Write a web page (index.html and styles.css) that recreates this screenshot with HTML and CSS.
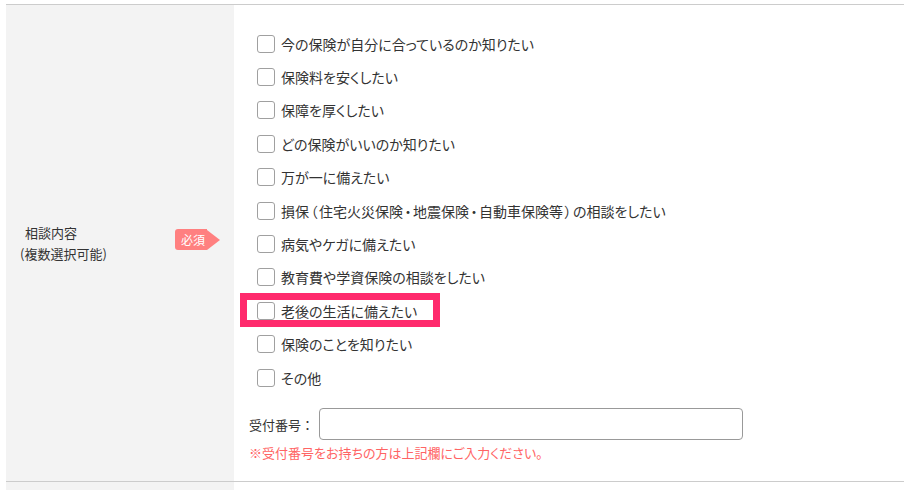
FILE: index.html
```html
<!DOCTYPE html>
<html lang="ja">
<head>
<meta charset="utf-8">
<title>相談内容</title>
<link rel="stylesheet" href="styles.css">
</head>
<body>
<div class="form">
  <div class="row">
    <div class="row-head">
      <div class="head-label">
        <span class="l1">相談内容</span>
        <span class="l2">(複数選択可能)</span>
      </div>
      <span class="badge"><span class="badge-text">必須</span><span class="badge-tip"></span></span>
    </div>
    <div class="row-body">
      <ul class="choices">
        <li class="choice"><span class="box"></span><span class="txt">今の保険が自分に合っているのか知りたい</span></li>
        <li class="choice"><span class="box"></span><span class="txt">保険料を安くしたい</span></li>
        <li class="choice"><span class="box"></span><span class="txt">保障を厚くしたい</span></li>
        <li class="choice"><span class="box"></span><span class="txt">どの保険がいいのか知りたい</span></li>
        <li class="choice"><span class="box"></span><span class="txt">万が一に備えたい</span></li>
        <li class="choice"><span class="box"></span><span class="txt">損保<span class="fw">（</span>住宅火災保険<span class="fw">・</span>地震保険<span class="fw">・</span>自動車保険等<span class="fw">）</span>の相談をしたい</span></li>
        <li class="choice"><span class="box"></span><span class="txt">病気やケガに備えたい</span></li>
        <li class="choice"><span class="box"></span><span class="txt">教育費や学資保険の相談をしたい</span></li>
        <li class="choice"><span class="box"></span><span class="txt">老後の生活に備えたい</span><span class="mark"></span></li>
        <li class="choice"><span class="box"></span><span class="txt">保険のことを知りたい</span></li>
        <li class="choice"><span class="box"></span><span class="txt">その他</span></li>
      </ul>
      <div class="receipt">
        <label class="receipt-label" for="receipt">受付番号：</label>
        <input class="receipt-input" id="receipt" type="text">
      </div>
      <p class="note">※受付番号をお持ちの方は上記欄にご入力ください。</p>
    </div>
  </div>
  <div class="row row-next">
    <div class="row-head"></div>
    <div class="row-body"></div>
  </div>
</div>
</body>
</html>
```
FILE: styles.css
```css
html {
  overflow: hidden;
}
body {
  margin: 0;
  padding-top: 4px;
  background: #fff;
  color: #333;
  font-family: "Noto Sans CJK JP", "Noto Sans", sans-serif;
}
.form {
  margin-left: 6px;
}
.row {
  display: flex;
  border-top: 1px solid #cccccc;
}
.row-head {
  width: 228px;
  flex: none;
  background: #f3f3f3;
  display: flex;
  align-items: center;
  padding-left: 14px;
  box-sizing: border-box;
}
.head-label {
  width: 155px;
  display: flex;
  flex-direction: column;
  font-size: 13px;
  line-height: 21px;
}
.l1 {
  padding-left: 5px;
}
.badge {
  display: flex;
  align-items: center;
  margin-bottom: 7px;
}
.badge-text {
  background: #ff8080;
  color: #fff;
  font-size: 12px;
  line-height: 21px;
  height: 21px;
  width: 32px;
  padding-left: 6px;
  box-sizing: border-box;
  border-radius: 3px 0 0 3px;
}
.badge-tip {
  width: 0;
  height: 0;
  border-left: 13px solid #ff8080;
  border-top: 10.5px solid transparent;
  border-bottom: 10.5px solid transparent;
}
.row-body {
  flex: 1;
  padding: 22px 0 18px 15px;
}
.choices {
  list-style: none;
  margin: 0;
  padding: 0 0 0 8px;
}
.choice {
  position: relative;
  height: 33.4px;
  display: flex;
  align-items: center;
  font-size: 14px;
  font-feature-settings: "palt";
}
.fw {
  padding: 0 1.5px;
}
.box {
  width: 18px;
  height: 18px;
  box-sizing: border-box;
  border: 1px solid #a0a0a0;
  border-radius: 3px;
  background: #fff;
  margin-right: 6px;
  flex: none;
}
.mark {
  position: absolute;
  left: -17px;
  top: -1px;
  width: 200px;
  height: 34px;
  box-sizing: border-box;
  border: 7px solid #ff2a6d;
  pointer-events: none;
}
.receipt {
  display: flex;
  align-items: center;
  margin-top: 14px;
}
.receipt-label {
  font-size: 13px;
  margin-right: 5px;
}
.receipt-input {
  width: 424px;
  height: 32px;
  box-sizing: border-box;
  border: 1px solid #999;
  border-radius: 4px;
  margin: 0;
  padding: 0 8px;
  font-size: 14px;
}
.note {
  margin: 3px 0 0;
  font-size: 13px;
  line-height: 20px;
  color: #ff6464;
  font-feature-settings: "palt";
}
.row-next .row-body {
  height: 30px;
  padding: 0;
}
```
